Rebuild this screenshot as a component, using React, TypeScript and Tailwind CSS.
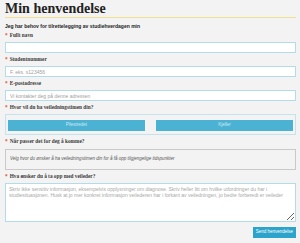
import React from 'react';

const serif = { fontFamily: '"Liberation Serif", "Times New Roman", serif' };

const Label: React.FC<{ text: string; className?: string }> = ({ text, className }) => (
  <div className={`flex items-center text-[5.3px] font-bold text-[#3a3a3a] ${className ?? 'h-[13px]'}`} style={serif}>
    <span className="text-[#e0533f] mr-[2px]">*</span>
    {text}
  </div>
);

const Input: React.FC<{ placeholder?: string }> = ({ placeholder }) => (
  <input
    placeholder={placeholder}
    className="block w-full h-[11px] box-border border border-[#b3dbe8] bg-white px-[4px] text-[5px] placeholder:text-[#a0a0a0] outline-none"
  />
);

export default function App() {
  return (
    <div className="w-[300px] h-[243px] bg-[#f3f3f3] pl-[5px] pr-[4px] overflow-hidden" style={{ fontFamily: '"Liberation Sans", Arial, sans-serif' }}>
      <h1 className="text-[14px] font-bold leading-[15px] text-[#222] pt-[1px]" style={serif}>
        Min henvendelse
      </h1>
      <div className="h-[1px] bg-[#efe08d] mt-[1px]" />
      <div className="mt-[5px] text-[5px] font-bold text-[#222] leading-[6px]">
        Jeg har behov for tilrettelegging av studiehverdagen min
      </div>

      <Label text="Fullt navn" className="h-[13px]" />
      <Input />
      <Label text="Studentnummer" />
      <Input placeholder="F. eks. s123456" />
      <Label text="E-postadresse" />
      <Input placeholder="Vi kontakter deg på denne adressen" />
      <Label text="Hvor vil du ha veiledningstimen din?" />
      <div className="border border-[#c4e3ec] px-[2px] pt-[5px] pb-[3px] flex gap-[11px]">
        <button className="flex-1 h-[11px] bg-[#4bb2d3] text-[#cfeaf3] text-[4.5px]">Pilestredet</button>
        <button className="flex-1 h-[11px] bg-[#4bb2d3] text-[#cfeaf3] text-[4.5px]">Kjeller</button>
      </div>
      <Label text="Når passer det for deg å komme?" className="h-[14px]" />
      <div className="h-[21px] border border-[#c9c9c9] flex items-center px-[4px] text-[4.5px] italic text-[#555]">
        Velg hvor du ønsker å ha veiledningstimen din for å få opp tilgjengelige tidspunkter
      </div>
      <Label text="Hva ønsker du å ta opp med veileder?" />
      <textarea
        placeholder="Skriv ikke sensitiv informasjon, eksempelvis opplysninger om diagnose. Skriv heller litt om hvilke utfordringer du har i studiesituasjonen. Husk at jo mer konkret informasjon veilederen har i forkant av veiledningen, jo bedre forberedt er veileder"
        className="block w-full h-[39px] box-border border border-[#b3dbe8] bg-white px-[3px] py-[2px] text-[5px] leading-[6px] placeholder:text-[#a8a8a8] outline-none resize-y"
      />
      <div className="flex justify-end mt-[5px]">
        <button className="h-[11px] px-[3px] bg-[#2ba3cb] text-white text-[4.5px]">Send henvendelse</button>
      </div>
    </div>
  );
}
